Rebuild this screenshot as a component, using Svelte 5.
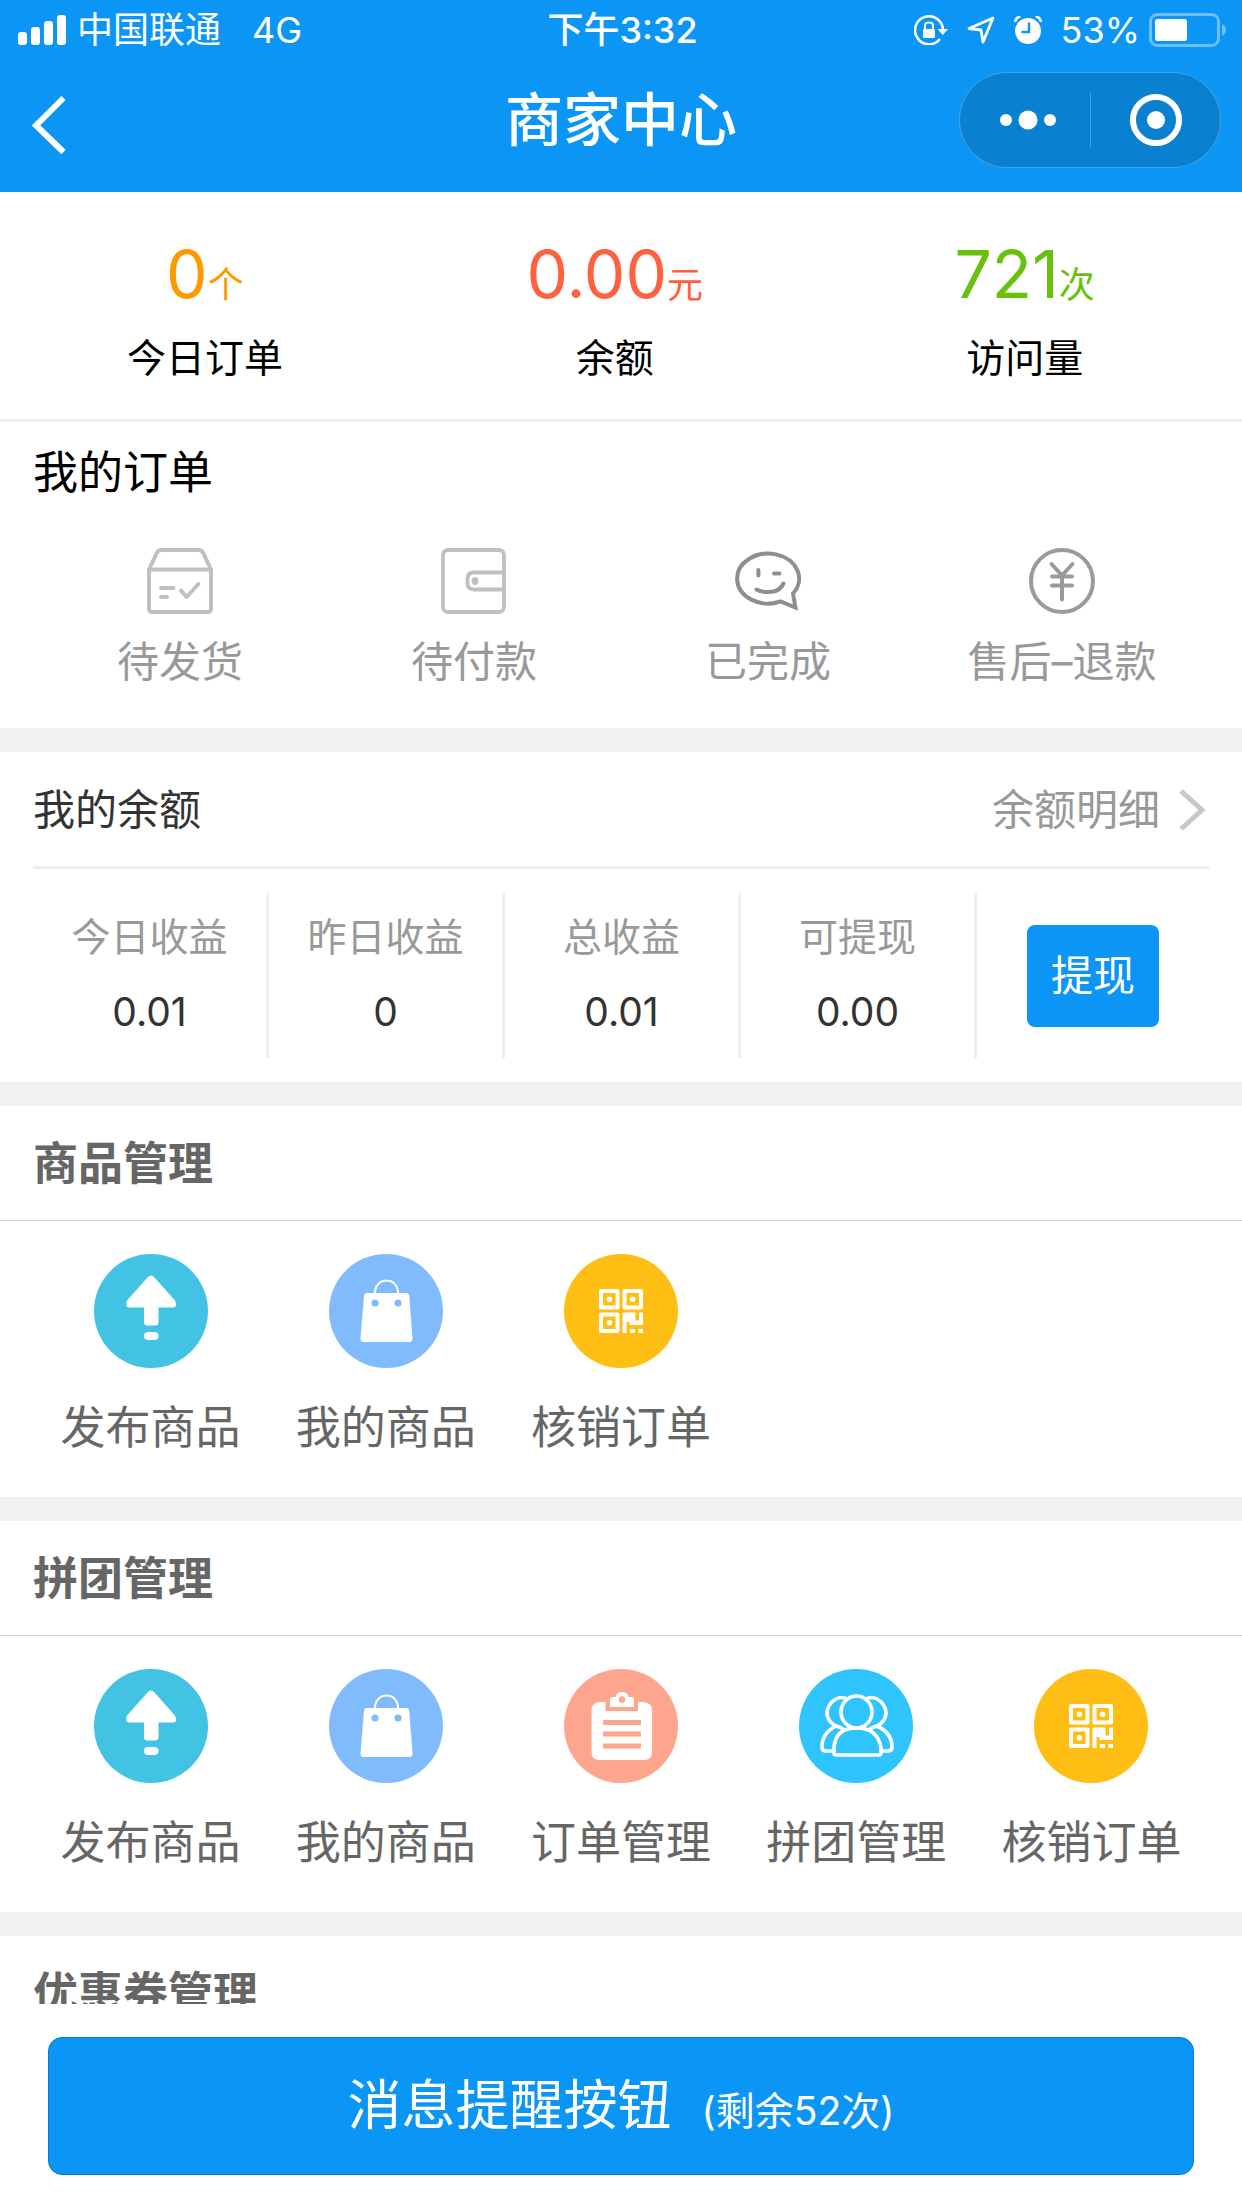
<script lang="ts">
	type Stat = { value: string; unit: string; label: string; tone: string };
	type Entry = { icon: string; label: string };
	type Group = { title: string; items: Entry[] };

	const stats: Stat[] = [
		{ value: '0', unit: '个', label: '今日订单', tone: 'orange' },
		{ value: '0.00', unit: '元', label: '余额', tone: 'red' },
		{ value: '721', unit: '次', label: '访问量', tone: 'green' }
	];

	const orders: Entry[] = [
		{ icon: 'box', label: '待发货' },
		{ icon: 'wallet', label: '待付款' },
		{ icon: 'smile', label: '已完成' },
		{ icon: 'refund', label: '售后–退款' }
	];

	const income = [
		{ label: '今日收益', value: '0.01' },
		{ label: '昨日收益', value: '0' },
		{ label: '总收益', value: '0.01' },
		{ label: '可提现', value: '0.00' }
	];

	const groups: Group[] = [
		{
			title: '商品管理',
			items: [
				{ icon: 'publish', label: '发布商品' },
				{ icon: 'bag', label: '我的商品' },
				{ icon: 'qr', label: '核销订单' }
			]
		},
		{
			title: '拼团管理',
			items: [
				{ icon: 'publish', label: '发布商品' },
				{ icon: 'bag', label: '我的商品' },
				{ icon: 'clipboard', label: '订单管理' },
				{ icon: 'people', label: '拼团管理' },
				{ icon: 'qr', label: '核销订单' }
			]
		},
		{ title: '优惠券管理', items: [] }
	];

	let remaining = $state(52);
</script>

{#snippet orderIcon(name: string)}
	<svg class="order-icon" viewBox="0 0 66 66" fill="none" stroke-linecap="round" stroke-linejoin="round" aria-hidden="true">
		{#if name === 'box'}
			<g stroke="#c0c0c0" stroke-width="4">
				<path d="M2 21.500 9.500 5.500Q11.200 2 14.500 2H51.500Q54.800 2 56.500 5.500L64 21.500V60.500Q64 64 60.500 64H5.500Q2 64 2 60.500Z" />
				<path d="M2 21.500H64M14 40H26.500M14 49H20" />
				<path d="M34 42.500 39.500 49 51.500 36" />
			</g>
		{:else if name === 'wallet'}
			<g stroke="#c0c0c0" stroke-width="3.800">
				<rect x="2" y="2" width="61" height="62" rx="5" />
				<path d="M63 24.500H33Q26.500 24.500 26.500 31V35Q26.500 41.500 33 41.500H63" />
			</g>
			<ellipse cx="34" cy="33" rx="3.400" ry="4" fill="#c0c0c0" />
		{:else if name === 'smile'}
			<g stroke="#8e8e8e" stroke-width="4">
				<path stroke-linejoin="miter" d="M58 45.500A31 25 0 1 0 45.500 53.500L60.500 59.500Z" />
				<path d="M23.400 22V27.500M39 25.500H44.500M21.500 41.500C27 44.500 34 44.200 38.500 43.600 43.500 42.500 46.500 39.500 48.500 35.500" />
			</g>
		{:else}
			<g stroke="#9a9a9a" stroke-width="4">
				<circle cx="33" cy="33" r="31" />
				<path d="M22.500 16 33 27.500 43.500 16M23 28.500H43M23 37.500H43M33 28V51.500" />
			</g>
		{/if}
	</svg>
{/snippet}

{#snippet roundIcon(name: string)}
	<svg class="round-icon" viewBox="0 0 114 114" aria-hidden="true">
		{#if name === 'publish'}
			<circle cx="57" cy="57" r="57" fill="#43c3e3" />
			<path d="M53.500 23.500Q57 19.500 60.500 23.500L81 46.500Q84 53 79 53.500H64.500V68Q64.500 71.500 61 71.500H53.500Q50 71.500 50 68V53.500H35.500Q30.500 53 33 46.500Z" fill="#fff" />
			<rect x="50" y="78" width="14.500" height="8" rx="4" fill="#fff" />
		{:else if name === 'bag'}
			<circle cx="57" cy="57" r="57" fill="#7fbbfd" />
			<path d="M46 41V37Q48 26.500 57.500 26.500T69 37V41" fill="none" stroke="#fff" stroke-width="2" />
			<path d="M38 39H77Q80 39 80.300 42L83.500 84Q83.700 88 80.500 88H34.500Q31.300 88 31.500 84L35 42Q35.300 39 38 39Z" fill="#fff" />
			<circle cx="46" cy="49" r="3.600" fill="#7fbbfd" />
			<circle cx="69" cy="49" r="3.600" fill="#7fbbfd" />
		{:else if name === 'qr'}
			<circle cx="57" cy="57" r="57" fill="#febe14" />
			<g fill="none" stroke="#fff" stroke-width="4" stroke-linejoin="round">
				<rect x="37" y="37" width="16.500" height="16.500" />
				<rect x="60.500" y="37" width="16.500" height="16.500" />
				<rect x="37" y="60.500" width="16.500" height="16.500" />
			</g>
			<g fill="#fff">
				<circle cx="45.300" cy="45.300" r="2.800" />
				<circle cx="68.700" cy="45.300" r="2.800" />
				<circle cx="45.300" cy="68.700" r="2.800" />
				<path d="M58.500 59.500Q58.500 58.500 59.500 58.500H71.500V66.500H75V58.500H79V71H65.500V68H62.500V79H58.500Z" />
				<rect x="66" y="75" width="5" height="4" />
				<rect x="74.500" y="75" width="4.500" height="4" />
			</g>
		{:else if name === 'clipboard'}
			<circle cx="57" cy="57" r="57" fill="#fea58e" />
			<path d="M35.500 33H41.500V42H74V33H80Q88 34 88 41V83Q88 91 80 91H35.500Q27.500 91 27.500 83V41Q27.500 34 35.500 33Z" fill="#fff" />
			<path d="M39 53.500H77M39 65H77M39 77H77" stroke="#fea58e" stroke-width="5" />
			<path d="M46 38V30Q46 28 49 28H51.500Q52.500 23 58 23T64.500 28H67Q70 28 70 30V38Z" fill="#fff" />
			<circle cx="58" cy="30.500" r="3.200" fill="#fea58e" />
		{:else}
			<circle cx="57" cy="57" r="57" fill="#2fc4fd" />
			<g fill="none" stroke="#fff" stroke-width="3.600" stroke-linecap="round" stroke-linejoin="round">
				<ellipse cx="57.500" cy="43" rx="15.500" ry="16" />
				<path d="M35 84V79Q36 59 57.500 59T82 79V84Q82 86 80 86H37Q35 86 35 84Z" />
				<path d="M48 30Q43 27 37 30 28 35 28 45 29 53 37 57 23 64 23 78 23 82 27 82H34" />
				<path d="M67 30Q72 27 78 30 87 35 87 45 86 53 78 57 93 64 93 78 93 82 89 82H82" />
				<path d="M37 57Q41 58 44 60M78 57Q74 58 71 60" />
			</g>
		{/if}
	</svg>
{/snippet}

<div class="page">
	<header class="header">
		<div class="status-bar">
			<div class="status-left">
				<svg width="48" height="30" viewBox="0 0 48 30" fill="#fff" aria-hidden="true">
					<rect x="0" y="17" width="9" height="13" rx="3" />
					<rect x="13" y="12" width="9" height="18" rx="3" />
					<rect x="26" y="6" width="9" height="24" rx="3" />
					<rect x="39" y="0" width="9" height="30" rx="3" />
				</svg>
				<span>中国联通</span>
				<span class="network">4G</span>
			</div>
			<div class="status-time">下午3:32</div>
			<div class="status-right">
				<svg width="34" height="30" viewBox="0 0 34 30" fill="none" aria-hidden="true">
					<path d="M29 15A14 14 0 1 0 26 24" stroke="#fff" stroke-width="2.600" />
					<path d="M23.500 14H34L28.800 20Z" fill="#fff" />
					<rect x="9" y="14" width="12" height="9" rx="1.500" fill="#fff" />
					<path d="M11 14V10.500Q11 7.500 15 7.500T19 10.500V14" stroke="#fff" stroke-width="2" />
				</svg>
				<svg width="28" height="28" viewBox="0 0 28 28" fill="none" aria-hidden="true">
					<path d="M26 2 2 12.500 14 14 16 26Z" stroke="#fff" stroke-width="2.800" stroke-linejoin="round" />
				</svg>
				<svg width="28" height="28" viewBox="0 0 28 28" fill="none" aria-hidden="true">
					<circle cx="14" cy="15" r="13" fill="#fff" />
					<path d="M1 6Q2 1 6.500 .500M27 6Q26 1 21.500 .500" stroke="#fff" stroke-width="2.600" />
					<path d="M15 6.500V16H7.500" stroke="#0b96f5" stroke-width="2.400" />
				</svg>
				<span>53%</span>
				<svg width="78" height="34" viewBox="0 0 78 34" fill="none" aria-hidden="true">
					<rect x="1.500" y="1.500" width="68" height="31" rx="7" stroke="#fff" stroke-opacity=".4" stroke-width="3" />
					<rect x="6" y="6" width="32" height="22" rx="2.500" fill="#fff" />
					<path d="M73 11Q77 13 77 17T73 23Z" fill="#fff" fill-opacity=".4" />
				</svg>
			</div>
		</div>
		<nav class="nav">
			<button class="back" type="button" aria-label="返回">
				<svg width="34" height="60" viewBox="0 0 34 60" fill="none" aria-hidden="true">
					<path d="M31.500 3 4 30.500 31.500 57" stroke="#fff" stroke-width="6" />
				</svg>
			</button>
			<h1>商家中心</h1>
			<div class="capsule">
				<button class="more" type="button" aria-label="更多">
					<svg width="56" height="20" viewBox="0 0 56 20" fill="#fff" aria-hidden="true">
						<circle cx="6" cy="10" r="6" />
						<circle cx="28" cy="10" r="9.500" />
						<circle cx="50" cy="10" r="6" />
					</svg>
				</button>
				<button type="button" aria-label="关闭">
					<svg width="52" height="52" viewBox="0 0 52 52" aria-hidden="true">
						<circle cx="26" cy="26" r="23" fill="none" stroke="#fff" stroke-width="6" />
						<circle cx="26" cy="26" r="9" fill="#fff" />
					</svg>
				</button>
			</div>
		</nav>
	</header>

	<main class="content">
		<section class="stats">
			{#each stats as s}
				<div class="stat">
					<div class="stat-value {s.tone}">{s.value}<small>{s.unit}</small></div>
					<div class="stat-label">{s.label}</div>
				</div>
			{/each}
		</section>

		<section class="orders">
			<h2>我的订单</h2>
			<div class="order-grid">
				{#each orders as o}
					<button class="order" type="button">
						{@render orderIcon(o.icon)}
						<span>{o.label}</span>
					</button>
				{/each}
			</div>
		</section>

		<section class="balance">
			<div class="balance-head">
				<h2>我的余额</h2>
				<a href="#detail">
					余额明细
					<svg width="28" height="44" viewBox="0 0 28 44" fill="none" aria-hidden="true">
						<path d="M3 3 24 22 3 41" stroke="#c7c7cc" stroke-width="5" />
					</svg>
				</a>
			</div>
			<div class="balance-grid">
				{#each income as item}
					<div class="income">
						<span class="income-label">{item.label}</span>
						<span class="income-value">{item.value}</span>
					</div>
				{/each}
				<div class="withdraw-cell">
					<button class="withdraw" type="button">提现</button>
				</div>
			</div>
		</section>

		{#each groups as g}
			<section class="group">
				<h2>{g.title}</h2>
				<div class="group-grid">
					{#each g.items as item}
						<button class="entry" type="button">
							{@render roundIcon(item.icon)}
							<span>{item.label}</span>
						</button>
					{/each}
				</div>
			</section>
		{/each}
	</main>

	<footer class="footer">
		<button class="notify" type="button">
			消息提醒按钮<small>(剩余{remaining}次)</small>
		</button>
	</footer>
</div>

<style>
	:global(body) {
		background: #fff;
	}

	.page {
		display: flex;
		flex-direction: column;
		height: 100vh;
		font-family: Inter, 'Noto Sans CJK SC', sans-serif;
		color: #000;
	}

	h1,
	h2 {
		margin: 0;
		font-weight: 400;
	}

	button {
		margin: 0;
		padding: 0;
		border: none;
		background: none;
		font: inherit;
		color: inherit;
		cursor: pointer;
	}

	small {
		line-height: 1;
	}

	svg {
		display: block;
		flex-shrink: 0;
	}

	.header {
		flex-shrink: 0;
		padding-bottom: 12px;
		background: #0b96f5;
		color: #fff;
	}

	.status-bar {
		display: grid;
		grid-template-columns: 1fr auto 1fr;
		align-items: center;
		height: 60px;
		padding: 0 15px 0 18px;
		font-size: 36px;
		line-height: 60px;
	}

	.status-left,
	.status-right {
		display: flex;
		align-items: center;
	}

	.status-left {
		gap: 11px;
	}

	.network {
		margin-left: 20px;
	}

	.status-time {
		font-weight: 500;
	}

	.status-right {
		justify-content: flex-end;
		gap: 19px;
	}

	.status-right span {
		margin-right: -10px;
	}

	.nav {
		display: grid;
		grid-template-columns: 1fr auto 1fr;
		align-items: center;
		height: 120px;
		padding: 0 21px;
	}

	.back {
		justify-self: start;
		padding: 10px 11px 0;
	}

	.nav h1 {
		font-size: 58px;
		font-weight: 500;
		line-height: 80px;
	}

	.capsule {
		display: grid;
		grid-template-columns: 1fr 1fr;
		align-items: center;
		justify-self: end;
		box-sizing: border-box;
		width: 262px;
		height: 96px;
		border: 1px solid rgba(255, 255, 255, 0.25);
		border-radius: 48px;
		background: #0a80d1;
	}

	.capsule button {
		display: flex;
		align-items: center;
		justify-content: center;
		height: 56px;
	}

	.capsule .more {
		padding-left: 6px;
	}

	.capsule button + button {
		border-left: 1px solid rgba(255, 255, 255, 0.25);
	}

	.content {
		flex: 1;
		min-height: 0;
		overflow-y: auto;
		scrollbar-width: none;
	}

	.stats {
		display: flex;
		padding: 42px 0 34px;
		border-bottom: 3px solid #eee;
	}

	.stat {
		width: 33%;
		text-align: center;
	}

	.stat-value {
		margin-bottom: 17px;
		font-size: 66px;
		line-height: 80px;
	}

	.stat-value small {
		font-size: 36px;
	}

	.orange {
		color: #ff9900;
	}

	.red {
		color: #ff6040;
	}

	.green {
		color: #68c20d;
	}

	.stat-label {
		font-size: 39px;
		line-height: 54px;
	}

	.orders {
		padding: 0 33px 36px;
		border-bottom: 24px solid #f1f1f1;
	}

	.orders h2 {
		font-size: 45px;
		line-height: 102px;
	}

	.order-grid {
		display: grid;
		grid-template-columns: repeat(4, 1fr);
		padding-top: 24px;
	}

	.order {
		display: flex;
		flex-direction: column;
		align-items: center;
		gap: 18px;
		font-size: 42px;
		line-height: 60px;
		color: #999;
	}

	.order-icon {
		width: 66px;
		height: 66px;
	}

	.balance {
		padding: 0 33px 24px;
		border-bottom: 24px solid #f1f1f1;
	}

	.balance-head {
		display: flex;
		align-items: center;
		justify-content: space-between;
		padding: 2px 3px 0 0;
		border-bottom: 3px solid #eee;
		font-size: 42px;
		line-height: 112px;
	}

	.balance-head h2 {
		font-size: 42px;
		color: #333;
	}

	.balance-head a {
		display: flex;
		align-items: center;
		gap: 18px;
		color: #999;
		text-decoration: none;
	}

	.balance-grid {
		display: grid;
		grid-template-columns: repeat(4, 236fr) 232fr;
		padding-top: 24px;
	}

	.income {
		display: flex;
		flex-direction: column;
		align-items: center;
		gap: 21px;
		padding: 17px 0 19px;
		border-right: 3px solid #eee;
		font-size: 39px;
		line-height: 54px;
	}

	.income-label {
		color: #999;
	}

	.income-value {
		color: #333;
	}

	.withdraw-cell {
		display: flex;
		align-items: center;
		justify-content: center;
	}

	.withdraw {
		padding: 0 24px;
		border-radius: 8px;
		background: #0b96f5;
		font-size: 42px;
		line-height: 102px;
		color: #fff;
	}

	.group {
		border-bottom: 24px solid #f1f1f1;
		color: #666;
	}

	.group h2 {
		padding: 2px 33px 0;
		border-bottom: 1px solid #ccc;
		font-size: 45px;
		font-weight: 700;
		line-height: 112px;
	}

	.group-grid {
		display: grid;
		grid-template-columns: repeat(5, 1fr);
		padding: 33px 33px 39px;
	}

	.entry {
		display: flex;
		flex-direction: column;
		align-items: center;
		gap: 30px;
		font-size: 45px;
		line-height: 60px;
	}

	.round-icon {
		width: 114px;
		height: 114px;
	}

	.footer {
		flex-shrink: 0;
		padding: 33px 48px;
		background: #fff;
	}

	.notify {
		display: block;
		box-sizing: border-box;
		width: 100%;
		border: 1px solid #0a78c4;
		border-radius: 14px;
		background: #0b96f5;
		font-size: 54px;
		line-height: 136px;
		color: #fff;
	}

	.notify small {
		margin-left: 30px;
		font-size: 39px;
	}
</style>
